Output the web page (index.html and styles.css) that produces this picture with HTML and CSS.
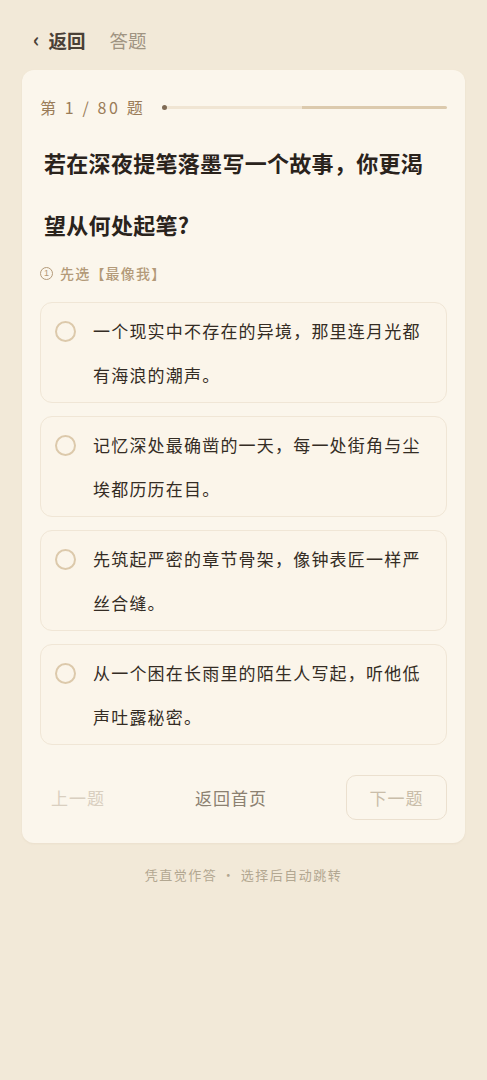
FILE: index.html
```html
<!DOCTYPE html>
<html lang="zh">
<head>
<meta charset="utf-8">
<title>答题</title>
<link rel="stylesheet" href="styles.css">
</head>
<body>
<header class="topbar">
  <a class="back"><span class="chev">‹</span>返回</a>
  <span class="title">答题</span>
</header>
<main class="card">
  <div class="progress-row">
    <span class="count">第 1 / 80 题</span>
    <div class="track"><span class="dot"></span></div>
  </div>
  <h1 class="question">若在深夜提笔落墨写一个故事，你更渴望从何处起笔?</h1>
  <div class="hint"><span class="num">1</span>先选【最像我】</div>
  <ul class="options">
    <li class="option"><span class="radio"></span><span class="otext">一个现实中不存在的异境，那里连月光都有海浪的潮声。</span></li>
    <li class="option"><span class="radio"></span><span class="otext">记忆深处最确凿的一天，每一处街角与尘埃都历历在目。</span></li>
    <li class="option"><span class="radio"></span><span class="otext">先筑起严密的章节骨架，像钟表匠一样严丝合缝。</span></li>
    <li class="option"><span class="radio"></span><span class="otext">从一个困在长雨里的陌生人写起，听他低声吐露秘密。</span></li>
  </ul>
  <div class="nav">
    <button class="btn prev">上一题</button>
    <button class="btn home">返回首页</button>
    <button class="btn next">下一题</button>
  </div>
</main>
<p class="foot">凭直觉作答 · 选择后自动跳转</p>
</body>
</html>
```
FILE: styles.css
```css
* { box-sizing: border-box; }
body {
  margin: 0;
  background: #f2e9d8;
  font-family: "Noto Sans CJK SC", "Noto Sans", sans-serif;
  color: #3a3129;
}
.topbar {
  display: flex;
  align-items: center;
  height: 40px;
  padding: 20px 0 0 33px;
  box-sizing: content-box;
  margin-bottom: 10px;
}
.back {
  font-size: 18.5px;
  font-weight: 700;
  color: #4a4036;
  display: flex;
  align-items: center;
}
.chev { font-size: 20px; margin-right: 9px; font-weight: 700; line-height: 1; position: relative; top: -1px; }
.title {
  font-size: 18.5px;
  color: #a09482;
  margin-left: 24px;
}
.card {
  margin: 0 22px;
  background: #fbf6ec;
  border-radius: 12px;
  padding: 25px 18px 23px;
  box-shadow: 0 1px 2px rgba(180, 160, 120, 0.12);
}
.progress-row {
  display: flex;
  align-items: center;
  height: 24px;
}
.count {
  font-size: 16px;
  color: #9a7c58;
  letter-spacing: 2.6px;
  white-space: nowrap;
}
.track {
  flex: 1;
  height: 3px;
  margin-left: 18px;
  border-radius: 2px;
  background: linear-gradient(to right, #f0e5d3 0%, #f0e5d3 49%, #dccaad 49%, #dccaad 100%);
  position: relative;
}
.dot {
  position: absolute;
  left: -1px;
  top: -1px;
  width: 5px;
  height: 5px;
  border-radius: 50%;
  background: #7f6b55;
}
.question {
  margin: 12px 20px 0 4px;
  font-size: 22px;
  line-height: 62px;
  font-weight: 700;
  color: #2a231c;
  letter-spacing: 0.3px;
  font-family: "Noto Sans CJK SC", serif;
}
.hint {
  margin-top: 8px;
  font-size: 14px;
  line-height: 20px;
  color: #b39a79;
  letter-spacing: 1.2px;
  font-weight: 500;
  display: flex;
  align-items: center;
}
.num {
  width: 13px;
  height: 13px;
  border: 1.2px solid #b39a79;
  border-radius: 50%;
  font-size: 9px;
  line-height: 11px;
  text-align: center;
  letter-spacing: 0;
  margin-right: 7px;
  font-family: "Liberation Sans", sans-serif;
}
.options {
  list-style: none;
  margin: 19px 0 0;
  padding: 0;
  display: flex;
  flex-direction: column;
  gap: 13px;
}
.option {
  display: flex;
  align-items: flex-start;
  border: 1px solid #f0e6d6;
  border-radius: 12px;
  background: #fbf5ea;
  padding: 6px 22px 5px 14px;
}
.radio {
  flex: none;
  width: 21px;
  height: 21px;
  border: 2px solid #dcc9ab;
  border-radius: 50%;
  margin-top: 12px;
  margin-right: 17px;
}
.otext {
  font-size: 17px;
  line-height: 44px;
  letter-spacing: 1.2px;
  color: #342c24;
}
.nav {
  display: flex;
  justify-content: space-between;
  align-items: center;
  margin-top: 30px;
}
.btn {
  font-family: "Noto Sans CJK SC", sans-serif;
  font-size: 17px;
  letter-spacing: 1px;
  background: none;
  border: 1px solid transparent;
  padding: 0 10px;
  height: 45px;
}
.prev { color: #d9cfc0; }
.home { color: #8c8171; }
.next {
  width: 101px;
  border-color: #ebe0cf;
  border-radius: 10px;
  color: #c9bda9;
}
.foot {
  margin: 22px 0 0;
  text-align: center;
  font-size: 13px;
  line-height: 20px;
  letter-spacing: 1.5px;
  color: #b2a791;
}
```
